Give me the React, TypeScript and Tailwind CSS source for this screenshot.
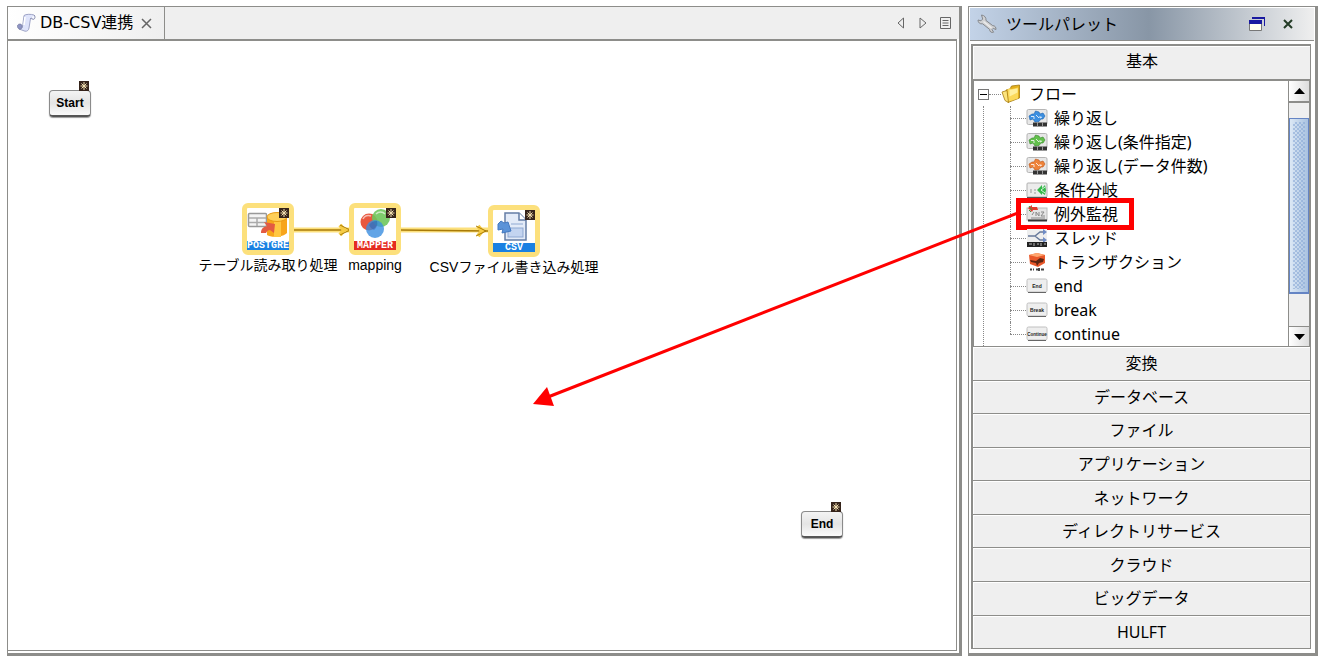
import React from 'react';

const uiFont = "font-['Noto_Sans','Noto_Sans_CJK_JP',sans-serif]";

function ScrollIcon() {
  return (
    <svg width="20" height="20" viewBox="0 0 20 20" aria-hidden="true">
      <path d="M8 2.500C10 1 15 1 18 2l-.5 4-3-.5L13 15c-.4 2.500-2 3.500-4 3.200L3 16c3 0 3.500-2 4-6z" fill="#dfe4fb" stroke="#8a90b8" strokeWidth="0.8" />
      <path d="M1.500 13.500C1 11 5 10 6 12.500c.8 2.500-1 4-2.500 3.500-1.300-.3-2-1.300-2-2.500z" fill="#8f95c4" stroke="#70759c" strokeWidth="0.7" />
      <path d="M18 2c1.500 1 1.300 4-.5 4.300-1.500 0-1.500-1.800-3-.8" fill="#f5f7ff" stroke="#70759c" strokeWidth="0.8" />
      <path d="M9 4l-1 8" stroke="#fff" strokeWidth="1.500" />
    </svg>
  );
}

function WrenchIcon() {
  return (
    <svg width="22" height="22" viewBox="0 0 22 22" aria-hidden="true">
      <path d="M5.500 2l1.200 4-1.700 1.800L2 7c0 2.600 2 4.300 4.600 3.800l7 5.600c0 2.300 1.800 3.600 4 2.800l-1.600-2.600 1.300-1.300 2.600 1.300c.4-2.200-1-4-3.200-4L10 7.500C10.300 4.500 8.500 2.300 5.500 2z" fill="#d0d1d3" stroke="#85888d" strokeWidth="1" />
      <path d="M7.500 8.500l8 6.500" stroke="#ececec" strokeWidth="1.500" />
    </svg>
  );
}

function FolderIcon() {
  return (
    <svg width="20" height="20" viewBox="0 0 20 20" aria-hidden="true">
      <path d="M5 6l4-1 1.500-3L18.500 1v13L7 18.500z" fill="#e3b01e" stroke="#a27a10" strokeWidth="0.8" />
      <path d="M6.500 5.500L9 4l1 1.200 7-1.700v11L6.500 18z" fill="#fbd95a" />
      <path d="M8.500 6l8-1.500v4l-8 4z" fill="#fff0a0" />
      <path d="M1 8l5-1.500 1.500 12L4 16.500z" fill="#fbe37c" stroke="#a87b0c" strokeWidth="0.8" />
    </svg>
  );
}

function LoopIcon({ color, dark }: { color: string; dark: string }) {
  return (
    <svg width="22" height="20" viewBox="0 0 22 20" aria-hidden="true">
      <rect x="1" y="1.500" width="20" height="15" rx="1.500" fill="#e7e7e7" stroke="#b5b5b5" />
      <path d="M3 8l3-2 2 0 1.500-3 3.500 1 1 2 3-1 2 3-2 3-2 0-2 2.500-4 .5-2-3-3 1z" fill={color} stroke={dark} strokeWidth="0.6" />
      <path d="M5 8.500h3v2.500M10 7l3 3M14 8v2l2-1" fill="none" stroke="#fff" strokeWidth="0.8" />
      <path d="M7 14.500h14v4H7z" fill="#333" />
      <path d="M11.500 14v4M16.500 14v4" stroke="#999" />
    </svg>
  );
}

function BranchIcon() {
  return (
    <svg width="22" height="18" viewBox="0 0 22 18" aria-hidden="true">
      <rect x="1" y="2" width="20" height="14" rx="1" fill="#ececec" stroke="#b0b0b0" />
      <path d="M1 16.500h20" stroke="#555" />
      <path d="M5 8v4M8 9h2M8 12h2" stroke="#999" />
      <path d="M11 9l5-5v3l3-3 1 5-1 5-3-2v2z" fill="#35b94a" />
      <path d="M15 9l4-3M15 9l4 3" stroke="#fff" strokeWidth="0.8" />
    </svg>
  );
}

function WatchIcon() {
  return (
    <svg width="22" height="20" viewBox="0 0 22 20" aria-hidden="true">
      <rect x="1" y="4" width="20" height="12" fill="#e5e5e5" stroke="#bbb" />
      <path d="M2 4l4-3v2h5l1 3H7l-1 2z" fill="#e23b2e" />
      <path d="M3 2l3 4M3 6l2 2" stroke="#3a9a42" />
      <path d="M6 11l2-3M10 12V8l3 4V8M15 8h3l-3 4h4M5 14h14" fill="none" stroke="#888" />
      <path d="M2 16.500h19" stroke="#333" strokeWidth="2" />
    </svg>
  );
}

function ThreadIcon() {
  return (
    <svg width="22" height="20" viewBox="0 0 22 20" aria-hidden="true">
      <rect x="1" y="1" width="20" height="14" fill="#eee" />
      <path d="M2 8h7l5-4h5M9 8l5 4h5" fill="none" stroke="#687a9b" strokeWidth="1.500" />
      <path d="M17 1l4 3-4 3zM17 9l4 3-4 3z" fill="#6f8cc6" />
      <path d="M1 14h20v5H1z" fill="#222" />
      <path d="M3 16h3M8 15v3M11 16h2M15 15v3M18 16h2" stroke="#bbb" />
    </svg>
  );
}

function TransactionIcon() {
  return (
    <svg width="22" height="20" viewBox="0 0 22 20" aria-hidden="true">
      <path d="M3 3l8-2 8 2v8l-7 4-8-3z" fill="#e9582a" />
      <path d="M3 3l8-2 8 2-8 2z" fill="#ffa66f" />
      <path d="M4 8l6 1 4-3 4 1-1 3-4 1-2 3-1-3-5-1z" fill="#5b2512" />
      <path d="M4 17.500h2M7 17.500h1M10 17.500h2M13 16v3M15 17.500h3" stroke="#444" strokeWidth="2" />
    </svg>
  );
}

function KeyIcon({ text, size }: { text: string; size: number }) {
  return (
    <svg width="22" height="16" viewBox="0 0 22 16" aria-hidden="true">
      <rect x="1" y="1" width="20" height="13" rx="1.500" fill="#eee" stroke="#c0c0c0" />
      <path d="M2 14.500h18" stroke="#666" />
      <text x="11" y="10" textAnchor="middle" fontSize={size} fontWeight="700" fontFamily="Liberation Sans" fill="#222">{text}</text>
    </svg>
  );
}

function Star() {
  return (
    <svg width="10" height="10" viewBox="0 0 10 10" aria-hidden="true">
      <rect width="10" height="10" fill="#35231a" />
      <path d="M5 1v8M1.500 5h7M2.500 2.500l5 5M7.500 2.500l-5 5" stroke="#f2dfb0" strokeWidth="1" />
    </svg>
  );
}

function PostgreArt() {
  return (
    <svg width="42" height="33" viewBox="0 0 42 33" aria-hidden="true">
      <rect x="1.500" y="5.500" width="18" height="13" rx="1" fill="#f4f4f4" stroke="#999" strokeWidth="1.500" />
      <path d="M2 10h17M2 14.500h17M10 10v8" stroke="#aaa" strokeWidth="1.500" />
      <path d="M20 9h20v16c-3 4-16 5-20 2z" fill="#f7a51b" />
      <path d="M27 11h7v18h-7z" fill="#ffc742" />
      <ellipse cx="30" cy="9" rx="10" ry="4.500" fill="#ffcf58" stroke="#e99a13" />
      <path d="M14 25c0-5 3-6 6-7l-3-4 11 2-1 9-4-3c-2 0-3 1-4 3z" fill="#e35a42" />
    </svg>
  );
}

function MapperArt() {
  return (
    <svg width="42" height="33" viewBox="0 0 42 33" aria-hidden="true">
      <circle cx="15" cy="14" r="8.500" fill="#e9583f" />
      <circle cx="27" cy="10" r="9" fill="#6fc65c" fillOpacity="0.9" />
      <circle cx="21" cy="21" r="9" fill="#3a8de0" fillOpacity="0.8" />
      <path d="M15 17a9 9 0 0 1 8-4 9 9 0 0 1-3 9 9 9 0 0 1-5-5z" fill="#2454a8" fillOpacity="0.4" />
      <path d="M22 6a6 6 0 0 1 9 0M9 11a6 6 0 0 1 8-3" fill="none" stroke="#fff" strokeOpacity="0.6" strokeWidth="1.500" />
    </svg>
  );
}

function CsvArt() {
  return (
    <svg width="42" height="33" viewBox="0 0 42 33" aria-hidden="true">
      <path d="M12 3h14l7 7v20H12z" fill="#e3ebf8" stroke="#647da5" strokeWidth="1.500" />
      <path d="M26 3v7h7" fill="#fff" stroke="#647da5" strokeWidth="1.500" />
      <rect x="15" y="18" width="15" height="9" fill="#c3d4f0" stroke="#8fa9d2" />
      <path d="M18 14h12" stroke="#8fa9d2" />
      <path d="M5 14l3-3 3 2 4-1 3 9-9 2 1-4-5 1z" fill="#5b93d8" stroke="#4379c0" />
    </svg>
  );
}

type NodeProps = { place: string; caption: string; band: string; label: string; art: React.ReactNode };

function ServiceNode({ place, caption, band, label, art }: NodeProps) {
  return (
    <div className={`absolute flex w-[180px] flex-col items-center ${place}`}>
      <div className="relative rounded-md border-[5px] border-[#fce07c] bg-white">
        {art}
        <div className={`flex h-[9px] items-center justify-center font-['Liberation_Mono',monospace] text-[10px] leading-[8px] font-bold text-white ${band}`}>{caption}</div>
        <span className="absolute top-0 right-0"><Star /></span>
      </div>
      <span className="font-['Liberation_Sans','Noto_Sans_CJK_JP',sans-serif] text-sm leading-5 whitespace-nowrap">{label}</span>
    </div>
  );
}

function KeyNode({ place, label }: { place: string; label: string }) {
  return (
    <div className={`absolute ${place}`}>
      <button className="h-[27px] w-[42px] rounded-[4px] border border-b-2 border-[#8b8b8b] border-b-[#555] bg-linear-to-b from-[#f4f4f4] via-[#e4e4e4] to-[#fafafa] font-['Liberation_Sans',sans-serif] text-xs font-bold shadow-[0_1px_1px_#999]">{label}</button>
      <span className="absolute -top-2 right-0.5"><Star /></span>
    </div>
  );
}

const items: { label: string; icon: React.ReactNode; marked?: boolean }[] = [
  { label: '繰り返し', icon: <LoopIcon color="#3c8fe0" dark="#1d62ad" /> },
  { label: '繰り返し(条件指定)', icon: <LoopIcon color="#62c04c" dark="#38872b" /> },
  { label: '繰り返し(データ件数)', icon: <LoopIcon color="#ee8238" dark="#b9561b" /> },
  { label: '条件分岐', icon: <BranchIcon /> },
  { label: '例外監視', icon: <WatchIcon />, marked: true },
  { label: 'スレッド', icon: <ThreadIcon /> },
  { label: 'トランザクション', icon: <TransactionIcon /> },
  { label: 'end', icon: <KeyIcon text="End" size={5} /> },
  { label: 'break', icon: <KeyIcon text="Break" size={5} /> },
  { label: 'continue', icon: <KeyIcon text="Continue" size={4.5} /> },
];

const categories = ['変換', 'データベース', 'ファイル', 'アプリケーション', 'ネットワーク', 'ディレクトリサービス', 'クラウド', 'ビッグデータ', 'HULFT'];

function Editor() {
  return (
    <main className="flex min-w-0 flex-1 flex-col border border-r-[3px] border-b-[3px] border-[#8d8d8a] bg-[#efefef]">
      <div className="flex h-8 items-stretch justify-between">
        <div className="flex items-center gap-1 border-r border-[#8d8d8a] bg-linear-to-r from-white to-[#efefef] pr-2.5 pl-2">
          <ScrollIcon />
          <span className="font-['DejaVu_Sans','Noto_Sans_CJK_JP',sans-serif] text-base leading-6">DB-CSV連携</span>
          <button aria-label="タブを閉じる" className="p-0.5 pl-1">
            <svg width="11" height="11" viewBox="0 0 11 11"><path d="M1 1l9 9M10 1l-9 9" stroke="#666" strokeWidth="1.500" /></svg>
          </button>
        </div>
        <div className="flex items-center gap-3 pr-2">
          <button aria-label="前へ"><svg width="10" height="12" viewBox="0 0 10 12"><path d="M7.500 1v10L2 6z" fill="none" stroke="#666" /></svg></button>
          <button aria-label="次へ"><svg width="10" height="12" viewBox="0 0 10 12"><path d="M2 1v10l6-5z" fill="none" stroke="#666" /></svg></button>
          <button aria-label="一覧"><svg width="11" height="12" viewBox="0 0 11 12"><path d="M.5.5h10v11H.5zM2.500 3.500h6M2.500 6h6M2.500 8.500h6" fill="none" stroke="#666" /></svg></button>
        </div>
      </div>
      <div className="flex flex-1 bg-white pr-0.5 pb-0.5">
        <div className="relative flex-1 overflow-hidden border-t-2 border-r border-b border-[#8d8d8a] bg-white">
          <svg className="absolute top-[176px] left-[284px]" width="202" height="28" viewBox="0 0 202 28" aria-hidden="true">
            <path d="M0 13h60M108 13h88" stroke="#fce07c" strokeWidth="5" />
            <path d="M0 13h60M108 13l88 1" stroke="#a97b08" strokeWidth="1.500" />
            <path d="M48 8l4 5-4 5M54 13h6M186 9l4 5-4 5" fill="none" stroke="#f6cc45" strokeWidth="4" />
            <path d="M48 8l10 5-10 5M184 9l10 5-10 5" fill="none" stroke="#a97b08" />
          </svg>
          <KeyNode place="top-[48px] left-[41px]" label="Start" />
          <ServiceNode place="top-[162px] left-[170px]" caption="POSTGRE" band="bg-[#1980e2]" label="テーブル読み取り処理" art={<PostgreArt />} />
          <ServiceNode place="top-[162px] left-[277px]" caption="MAPPER" band="bg-[#e52b20]" label="mapping" art={<MapperArt />} />
          <ServiceNode place="top-[164px] left-[416px]" caption="CSV" band="bg-[#1980e2]" label="CSVファイル書き込み処理" art={<CsvArt />} />
          <KeyNode place="top-[469px] left-[793px]" label="End" />
        </div>
      </div>
    </main>
  );
}

function Tree() {
  return (
    <div className="flex h-[268px] shrink-0 border-t-2 border-b border-l border-[#8d8d8a] bg-white">
      <div className="min-w-0 flex-1 overflow-hidden pt-px pl-1">
        <div className="flex h-6 items-center">
          <button aria-label="フローを折りたたむ" className="flex size-[11px] items-center justify-center border border-[#777]"><span className="h-px w-[7px] bg-black" /></button>
          <span className="w-3 border-t border-dotted border-[#888]" />
          <FolderIcon />
          <span className="pl-2 text-base leading-6">フロー</span>
        </div>
        <ul className="ml-[5px] border-l border-dotted border-[#888] pb-4 pl-[26px]">
          {items.map((item, i) => (
            <li key={item.label} className="relative flex h-6 items-center">
              <span className={`absolute left-0 border-l border-dotted border-[#888] ${i === items.length - 1 ? 'top-0 h-3' : 'inset-y-0'}`} />
              <span className="w-4 border-t border-dotted border-[#888]" />
              <span className="flex w-[22px] items-center">{item.icon}</span>
              <span className="pl-1.5 text-base leading-6 whitespace-nowrap">{item.label}</span>
              {item.marked && <span className="absolute -top-1 left-[6px] h-8 w-[118px] border-[5px] border-[#f00]" />}
            </li>
          ))}
        </ul>
      </div>
      <div className="flex w-[22px] flex-col border-x border-[#8d8d8a] bg-[#efefef]">
        <button aria-label="上へスクロール" className="flex h-[22px] items-center justify-center border-b-2 border-[#8d8d8a] bg-linear-to-r from-white to-[#ddd]"><svg width="11" height="6" viewBox="0 0 11 6"><path d="M0 6l5.500-6L11 6z" /></svg></button>
        <div className="h-[15px]" />
        <div className="h-[176px] border border-b-2 border-[#6484c4] bg-linear-to-r from-[#dce8f5] to-[#a9c2e0] p-[3px]">
          <div className="h-full bg-[conic-gradient(#8aa9d6_25%,transparent_0_50%,#8aa9d6_0_75%,transparent_0)] bg-[size:4px_4px] opacity-60" />
        </div>
        <div className="flex-1" />
        <button aria-label="下へスクロール" className="flex h-5 items-center justify-center border-t border-[#8d8d8a] bg-linear-to-r from-white to-[#ddd]"><svg width="11" height="6" viewBox="0 0 11 6"><path d="M0 0l5.500 6L11 0z" /></svg></button>
      </div>
    </div>
  );
}

function Palette() {
  return (
    <aside className="flex w-[350px] shrink-0 flex-col border border-r-[3px] border-b-[3px] border-[#8d8d8a] bg-white">
      <header className="m-px flex h-[33px] items-center border-b border-[#8d8d8a] bg-linear-to-r from-[#c3d3e8] via-[#8896a6] via-52% to-[#efefef] pr-5 pl-1.5">
        <WrenchIcon />
        <h1 className="flex-1 pl-2 text-base leading-6">ツールパレット</h1>
        <button aria-label="ウィンドウ" className="mr-4"><svg width="17" height="16" viewBox="0 0 17 16"><path d="M3 1h13v9h-1V3H3z" fill="#1919a0" /><path d="M.5 4.500h12v10H.5z" fill="#fffef0" stroke="#777" /><path d="M0 4h13v4H0z" fill="#1919a0" /></svg></button>
        <button aria-label="閉じる"><svg width="12" height="12" viewBox="0 0 12 12"><path d="M2 2l8 8M10 2l-8 8" stroke="#233b26" strokeWidth="2" /></svg></button>
      </header>
      <div className="mt-0.5 mr-1 mb-1 ml-0.5 flex min-h-0 flex-1 flex-col border-t-2 border-r border-l-2 border-[#8d8d8a] bg-[#efefef]">
        <button className="h-[33px] shrink-0 border-t border-l border-white pb-1 text-base leading-6">基本</button>
        <Tree />
        <div className="flex min-h-0 flex-1 flex-col">
          {categories.map((name) => (
            <button key={name} className="flex min-h-0 flex-1 items-center justify-center border-b border-[#8d8d8a] text-base leading-6 shadow-[inset_1px_1px_0_#fff]">{name}</button>
          ))}
        </div>
      </div>
    </aside>
  );
}

export default function App() {
  return (
    <div className={`relative flex h-screen min-h-[560px] min-w-[960px] gap-[6px] overflow-hidden bg-white pt-1.5 pr-[9px] pb-1.5 pl-[7px] text-black ${uiFont}`}>
      <Editor />
      <Palette />
      <svg className="pointer-events-none absolute top-[200px] right-[307px]" width="490" height="210" viewBox="0 0 490 210" aria-hidden="true">
        <path d="M488 13L18 197" stroke="#f00" strokeWidth="3" />
        <path d="M3 204l14-17 7 19z" fill="#f00" />
      </svg>
    </div>
  );
}
